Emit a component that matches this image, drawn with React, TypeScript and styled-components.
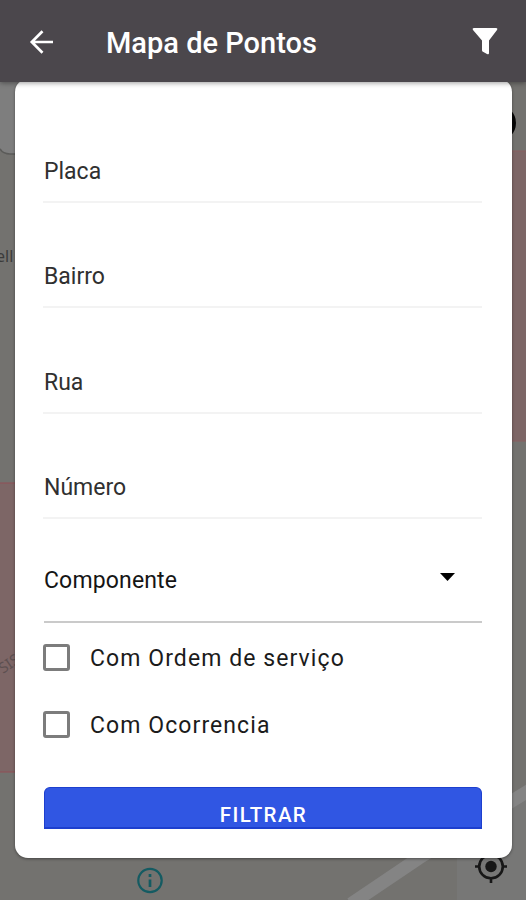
import React from "react";
import styled, { createGlobalStyle } from "styled-components";

const GlobalStyle = createGlobalStyle`
  *, *::before, *::after { box-sizing: border-box; }
  body { margin: 0; font-family: Roboto, "Liberation Sans", sans-serif; background: #73726f; }
`;

const Screen = styled.div`
  position: relative;
  display: flex;
  flex-direction: column;
  height: 900px;
  width: 526px;
  overflow: hidden;
`;

const MapCanvas = styled.svg`
  position: absolute;
  inset: 0;
`;

const Header = styled.header`
  position: relative;
  z-index: 2;
  display: flex;
  align-items: center;
  flex: none;
  height: 82px;
  padding: 1px 28px 0 29px;
  background: #4b474c;
  color: #fff;
  box-shadow: 0 1px 5px rgba(0, 0, 0, 0.4);
`;

const Title = styled.h1`
  flex: 1;
  margin: 0 0 0 52px;
  padding-top: 3px;
  font-size: 29px;
  font-weight: 500;
  line-height: 32px;
  white-space: nowrap;
`;

const Card = styled.main`
  position: relative;
  z-index: 1;
  flex: none;
  display: flex;
  flex-direction: column;
  height: 779px;
  margin: -3px 14px 0 15px;
  padding: 18px 30px 30px 28px;
  border-radius: 13px;
  background: #fff;
  box-shadow: 0 1px 3px rgba(0, 0, 0, 0.4);
`;

const Field = styled.label<{ $height: number }>`
  display: flex;
  flex: none;
  align-items: flex-end;
  height: ${(p) => p.$height}px;
  padding: 0 0 15px 1px;
  border-bottom: 2px solid #f3f3f3;
  color: #303030;
  font-size: 23px;
  line-height: 28px;
`;

const Select = styled.div`
  display: flex;
  flex: none;
  align-items: center;
  justify-content: space-between;
  height: 104px;
  margin-left: 1px;
  padding: 20px 27px 0 0;
  border-bottom: 2px solid #cacaca;
  color: #151515;
  font-size: 23px;
  letter-spacing: 0.15px;
`;

const Caret = styled.svg`
  margin-top: -7px;
`;

const Options = styled.div`
  display: flex;
  flex: none;
  flex-direction: column;
  gap: 40px;
  padding-top: 21px;
`;

const Option = styled.label`
  display: flex;
  align-items: center;
  gap: 20px;
  height: 27px;
  color: #1b1b1b;
  font-size: 23px;
  letter-spacing: 1.08px;
  white-space: nowrap;
`;

const OptionText = styled.span`
  padding-top: 2px;
`;

const Box = styled.span`
  width: 27px;
  height: 27px;
  border: 3px solid #7c7c7c;
  border-radius: 3px;
`;

const Submit = styled.button`
  flex: none;
  height: 42px;
  margin: 49px 0 0 1px;
  padding: 14px 0 0 1px;
  border: solid #1d3fce;
  border-width: 1px 1px 2px;
  border-radius: 6px 6px 0 0;
  background: #3056e3;
  color: #fff;
  font: 500 20.5px/26px Roboto, "Liberation Sans", sans-serif;
  letter-spacing: 1.4px;
`;

const fields = [
  { name: "Placa", height: 106 },
  { name: "Bairro", height: 105 },
  { name: "Rua", height: 106 },
  { name: "Número", height: 105 },
];

function MapBackground() {
  return (
    <MapCanvas width="526" height="900" viewBox="0 0 526 900">
      <rect width="526" height="900" fill="#73726f" />
      <path d="M457 900V836L526 792V900Z" fill="#777776" />
      <path d="M351 904L419 858L530 790" fill="none" stroke="#848484" strokeWidth="13" />
      <path d="M0 60H30V154H10Q3 154 0 148Z" fill="#7e7e7e" />
      <path d="M0 149Q3 154 10 154H30" fill="none" stroke="#5b5b59" strokeWidth="1.5" />
      <path d="M500 151H527V441H500Z" fill="#7d6666" stroke="#8a5e60" />
      <path d="M-1 483H30V772H-1Z" fill="#7d6666" stroke="#914f57" />
      <circle cx="498" cy="123" r="18" fill="#050505" />
      <text x="-4" y="262" fill="#3b3b3a" fontFamily="Noto Sans, sans-serif" fontSize="16">ell</text>
      <text x="3" y="674" transform="rotate(-34 3 674)" fill="#5d5051" fontFamily="Noto Sans, sans-serif" fontSize="15">SIS</text>
      <g fill="none" stroke="#145b62" strokeWidth="2.2">
        <circle cx="150" cy="880.500" r="11.700" />
        <path d="M150 879.500V887M150 874V877" strokeWidth="2.700" />
      </g>
      <g fill="none" stroke="#171717" strokeWidth="2.600">
        <circle cx="491" cy="866.500" r="11.800" />
        <circle cx="491" cy="866.500" r="5.700" fill="#171717" stroke="none" />
        <path d="M475 866.500H480M502 866.500H507M491 878V883M491 850V855" />
      </g>
    </MapCanvas>
  );
}

export default function App() {
  return (
    <Screen>
      <GlobalStyle />
      <MapBackground />
      <Header>
        <svg width="25" height="26" viewBox="0 0 25 26" fill="none" stroke="#fff" strokeWidth="2.700">
          <path d="M24 13H3M13.500 2.200L2.800 13L13.500 23.800" />
        </svg>
        <Title>Mapa de Pontos</Title>
        <svg width="26" height="29" viewBox="0 0 26 29" fill="#fff">
          <path d="M2 1H24Q26 1 25 3L17 13.500V26Q17 28 15 27L10.500 24.500Q10 24 10 23V13.500L1 3Q0 1 2 1Z" />
        </svg>
      </Header>
      <Card>
        {fields.map((f) => (
          <Field key={f.name} $height={f.height}>{f.name}</Field>
        ))}
        <Select>
          <span>Componente</span>
          <Caret width="15" height="8" viewBox="0 0 15 8"><path d="M0 0H15L7.500 8Z" fill="#000" /></Caret>
        </Select>
        <Options>
          <Option><Box /><OptionText>Com Ordem de serviço</OptionText></Option>
          <Option><Box /><OptionText>Com Ocorrencia</OptionText></Option>
        </Options>
        <Submit>FILTRAR</Submit>
      </Card>
    </Screen>
  );
}
